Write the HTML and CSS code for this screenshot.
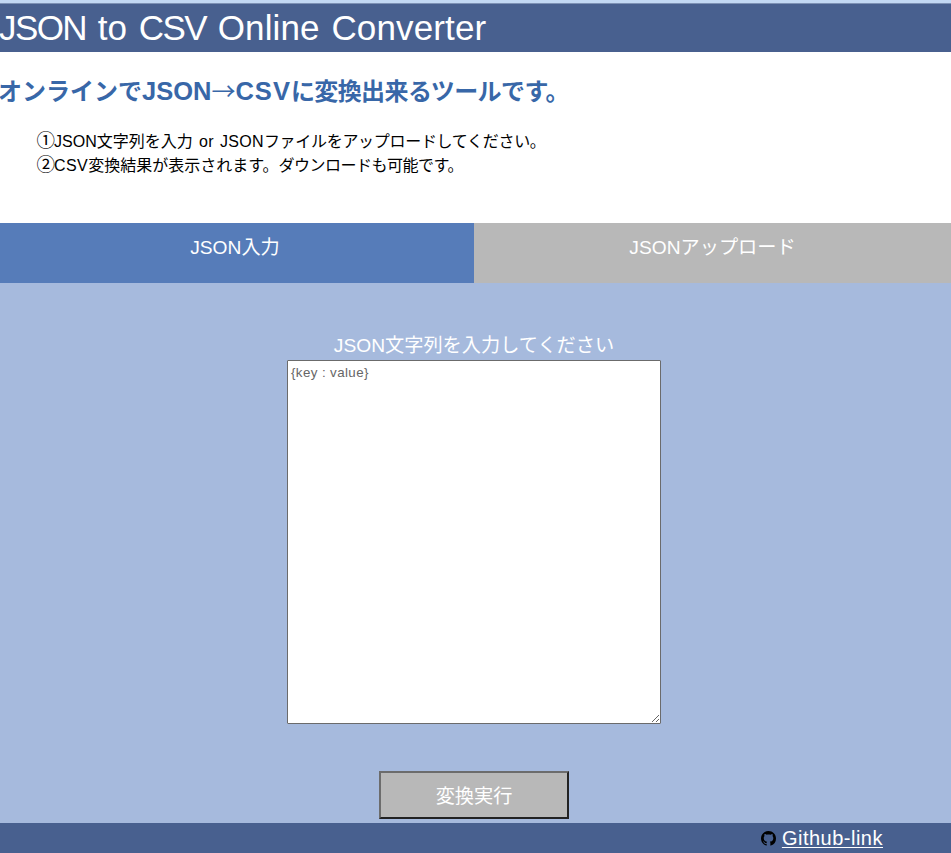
FILE: index.html
```html
<!DOCTYPE html>
<html lang="ja">
<head>
<meta charset="utf-8">
<title>JSON to CSV Online Converter</title>
<link rel="stylesheet" href="styles.css">
</head>
<body>
<header class="header"><h1 class="title"><span class="caps">JSON</span> to <span class="caps">CSV</span> Online Converter</h1></header>
<main>
<section class="intro">
<h2 class="lead">オンラインで<span class="lead-json">JSON</span><span class="arrow">→</span><span class="lead-csv">CSV</span><span class="lead-tail">に変換出来るツールです。</span></h2>
<ul class="steps">
<li><span class="num">①</span>JSON文字列を入力<span class="or"> or JSON</span><span class="upload-text">ファイルをアップロードしてください。</span></li>
<li><span class="num">②</span><span class="csv">CSV</span>変換結果が表示されます。<span class="download-text">ダウンロードも可能です。</span></li>
</ul>
</section>
<nav class="tabs">
<div class="tab active">JSON入力</div>
<div class="tab upload">JSONアップロード</div>
</nav>
<section class="panel">
<label class="label" for="json">JSON文字列を入力してください</label>
<textarea class="input" id="json" placeholder="{key : value}"></textarea>
<button class="run" type="button">変換実行</button>
</section>
</main>
<footer class="footer">
<svg class="icon" viewBox="0 0 16 16" aria-hidden="true"><path d="M8 0C3.58 0 0 3.58 0 8c0 3.54 2.29 6.53 5.47 7.59.4.07.55-.17.55-.38 0-.19-.01-.82-.01-1.49-2.01.37-2.53-.49-2.69-.94-.09-.23-.48-.94-.82-1.13-.28-.15-.68-.52-.01-.53.63-.01 1.08.58 1.23.82.72 1.21 1.87.87 2.33.66.07-.52.28-.87.51-1.07-1.78-.2-3.64-.89-3.64-3.95 0-.87.31-1.59.82-2.15-.08-.2-.36-1.02.08-2.12 0 0 .67-.21 2.2.82.64-.18 1.32-.27 2-.27s1.36.09 2 .27c1.53-1.04 2.2-.82 2.2-.82.44 1.1.16 1.92.08 2.12.51.56.82 1.27.82 2.15 0 3.07-1.87 3.75-3.65 3.95.29.25.54.73.54 1.48 0 1.07-.01 1.93-.01 2.2 0 .21.15.46.55.38A8.01 8.01 0 0 0 16 8c0-4.42-3.58-8-8-8z"/></svg>
<a class="link" href="#">Github-link</a>
</footer>
</body>
</html>
```
FILE: styles.css
```css
* { box-sizing: border-box; }
body {
  margin: 0;
  height: 853px;
  overflow: hidden;
  font-family: "Liberation Sans", "Noto Sans CJK JP", sans-serif;
  font-size: 16px;
  color: #000;
  background: #fff;
}
.header {
  height: 52px;
  border-top: 3px solid #c2d8f4;
  background: #48608f;
  box-shadow: inset 0 1px #7d91b5;
}
.title {
  margin: 0 0 0 -1px;
  padding-top: 1px;
  color: #fff;
  font-size: 35px;
  line-height: 48px;
  font-weight: 400;
  letter-spacing: 0.15px;
  word-spacing: 1.8px;
  white-space: nowrap;
}
.caps { letter-spacing: -1.6px; }
.intro { height: 171px; padding-top: 20px; white-space: nowrap; }
.lead {
  margin: 0 0 0 -2px;
  height: 36px;
  color: #3867a8;
  font-size: 24px;
  line-height: 36px;
  font-weight: 700;
}
.lead-json { font-size: 25.5px; letter-spacing: 0; line-height: 1; }
.arrow { font-family: "Noto Sans CJK JP", sans-serif; font-weight: 400; }
.lead-csv { font-size: 25.5px; letter-spacing: 1px; line-height: 1; }
.lead-tail { letter-spacing: -0.6px; }
.steps { list-style: none; margin: 22px 0 0; padding: 0 0 0 36.5px; line-height: 24px; }
.steps li { height: 24px; }
.num { font-family: "Noto Sans CJK JP", sans-serif; font-size: 18.5px; letter-spacing: -1px; line-height: 1; }
.or { letter-spacing: 0.3px; word-spacing: 1.5px; }
.csv { letter-spacing: 0.4px; }
.upload-text { letter-spacing: -0.3px; }
.download-text { letter-spacing: -0.5px; }
.tabs { display: grid; grid-template-columns: 474px 1fr; height: 60px; }
.tab {
  padding-top: 10px;
  text-align: center;
  color: #fff;
  font-size: 19.2px;
  line-height: 30px;
}
.active { background: #567cb9; padding-right: 4px; }
.upload { background: #b8b8b8; }
.panel {
  height: 540px;
  padding: 48px 3px 0 0;
  display: flex;
  flex-direction: column;
  align-items: center;
  background: #a6badd;
}
.label { color: #fff; font-size: 19.2px; line-height: 29px; white-space: nowrap; }
.input {
  width: 374px;
  height: 364px;
  margin: 0;
  padding: 2px 3px;
  border: 1px solid #6b6b6b;
  border-radius: 1px;
  background: #fff;
  font: 13.333px/20px "Liberation Sans", sans-serif;
  letter-spacing: 0.4px;
  resize: both;
}
.input::placeholder { color: #666; }
.run {
  width: 190px;
  height: 48px;
  margin-top: 47px;
  padding: 0 0 1px;
  border: 2px solid;
  border-color: #6c6c6c #222 #222 #6c6c6c;
  background: #b8b8b8;
  color: #fff;
  font: 19.2px "Noto Sans CJK JP", sans-serif;
}
.footer {
  height: 30px;
  display: flex;
  align-items: center;
  justify-content: flex-end;
  gap: 6px;
  padding-right: 68px;
  background: #48608f;
}
.icon { width: 15px; height: 15px; }
.link { color: #fff; font-size: 20px; line-height: 30px; letter-spacing: 0.5px; text-underline-offset: 2px; text-decoration-thickness: 1px; }
```
